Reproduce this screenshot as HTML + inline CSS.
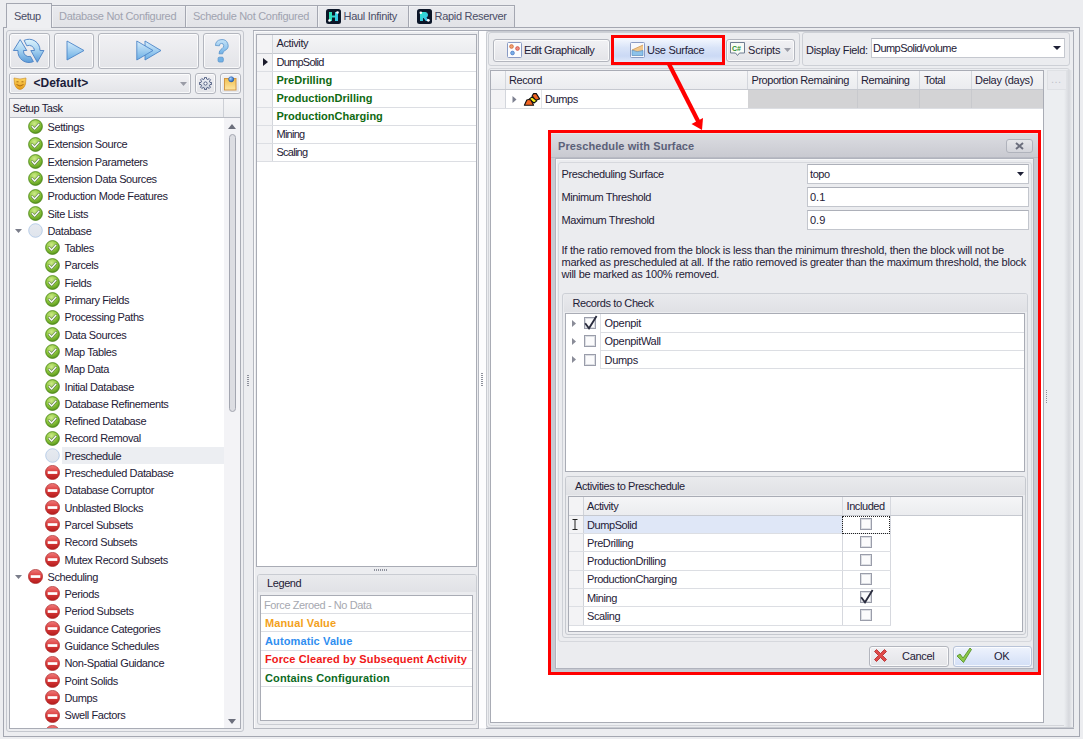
<!DOCTYPE html><html><head><meta charset="utf-8"><style>
html,body{margin:0;padding:0;}
body{width:1083px;height:739px;position:relative;overflow:hidden;background:#ecedf0;font-family:"Liberation Sans", sans-serif;font-size:11px;color:#1e2036;}
.t{position:absolute;white-space:nowrap;line-height:13px;letter-spacing:-0.4px;}
</style></head><body><div style="position:absolute;left:3px;top:27px;width:1077px;height:710px;box-sizing:border-box;border:1px solid #a4a7b1;background:#ecedf0"></div><div style="position:absolute;left:51px;top:5px;width:135px;height:23px;box-sizing:border-box;border:1px solid #a4a7b1;background:linear-gradient(#e9eaee,#e2e3e7);box-shadow:inset 1px 1px 0 #f1f2f4"></div><div class="t" style="left:59px;top:10px;color:#a0a3b0;letter-spacing:-0.3px">Database Not Configured</div><div style="position:absolute;left:185px;top:5px;width:133px;height:23px;box-sizing:border-box;border:1px solid #a4a7b1;background:linear-gradient(#e9eaee,#e2e3e7);box-shadow:inset 1px 1px 0 #f1f2f4"></div><div class="t" style="left:193px;top:10px;color:#a0a3b0;letter-spacing:-0.3px">Schedule Not Configured</div><div style="position:absolute;left:317px;top:5px;width:92px;height:23px;box-sizing:border-box;border:1px solid #a4a7b1;background:linear-gradient(#e9eaee,#e2e3e7);box-shadow:inset 1px 1px 0 #f1f2f4"></div><svg style="position:absolute;left:326px;top:9px" width="15" height="15" viewBox="0 0 15 15"><defs><linearGradient id="hg" x1="0" y1="0" x2="1" y2="0"><stop offset="0" stop-color="#2ee6b0"/><stop offset="1" stop-color="#3cc8f0"/></linearGradient></defs><rect x="0" y="0" width="15" height="15" rx="2.5" fill="#0c1628"/><path d="M3 3h3v3.5h3V3h3v9H9V8.5H6V12H3z" fill="url(#hg)"/><circle cx="11.5" cy="3.5" r="1.3" fill="#fff"/><circle cx="3.5" cy="11.5" r="1.3" fill="#fff"/></svg><div class="t" style="left:343.5px;top:10px;color:#4a4d66;letter-spacing:-0.3px">Haul Infinity</div><div style="position:absolute;left:408px;top:5px;width:107px;height:23px;box-sizing:border-box;border:1px solid #a4a7b1;background:linear-gradient(#e9eaee,#e2e3e7);box-shadow:inset 1px 1px 0 #f1f2f4"></div><svg style="position:absolute;left:417px;top:9px" width="15" height="15" viewBox="0 0 15 15"><defs><linearGradient id="rg" x1="0" y1="0" x2="1" y2="1"><stop offset="0" stop-color="#2ee6c8"/><stop offset="1" stop-color="#3cb8f0"/></linearGradient></defs><rect x="0" y="0" width="15" height="15" rx="2.5" fill="#0c1628"/><path d="M3 3h5.5a3 3 0 0 1 1 5.6L12 12H8.8L6.6 9H6v3H3z" fill="url(#rg)"/><circle cx="3.8" cy="3.8" r="1.3" fill="#fff"/><circle cx="11.3" cy="11.3" r="1.4" fill="#fff"/></svg><div class="t" style="left:434.5px;top:10px;color:#4a4d66;letter-spacing:-0.3px">Rapid Reserver</div><div style="position:absolute;left:6px;top:3px;width:46px;height:25px;box-sizing:border-box;border:1px solid #a4a7b1;border-bottom:none;background:#eeeff2"></div><div class="t" style="left:14px;top:10px;color:#4a4d66">Setup</div><div style="position:absolute;left:6px;top:30px;width:238px;height:702px;box-sizing:border-box;border:1px solid #c4c7ce;border-radius:3px;background:#ecedf0"></div><div style="position:absolute;left:9px;top:33px;width:41px;height:36px;box-sizing:border-box;border:1px solid #b3b6be;border-radius:3px;background:linear-gradient(#f1f1f4,#e3e4e8);box-shadow:inset 0 0 0 1px rgba(255,255,255,0.75);"></div><div style="position:absolute;left:54px;top:33px;width:40px;height:36px;box-sizing:border-box;border:1px solid #b3b6be;border-radius:3px;background:linear-gradient(#f1f1f4,#e3e4e8);box-shadow:inset 0 0 0 1px rgba(255,255,255,0.75);"></div><div style="position:absolute;left:98px;top:33px;width:101px;height:36px;box-sizing:border-box;border:1px solid #b3b6be;border-radius:3px;background:linear-gradient(#f1f1f4,#e3e4e8);box-shadow:inset 0 0 0 1px rgba(255,255,255,0.75);"></div><div style="position:absolute;left:203px;top:33px;width:38px;height:36px;box-sizing:border-box;border:1px solid #b3b6be;border-radius:3px;background:linear-gradient(#f1f1f4,#e3e4e8);box-shadow:inset 0 0 0 1px rgba(255,255,255,0.75);"></div><svg style="position:absolute;left:9px;top:33px" width="41" height="36" viewBox="0 0 41 36"><defs><linearGradient id="bl" x1="0" y1="0" x2="0" y2="1"><stop offset="0" stop-color="#dff4fd"/><stop offset="0.45" stop-color="#a8d4f2"/><stop offset="1" stop-color="#5b9bd8"/></linearGradient></defs>
<path d="M9 17.5 L4.4 17.5 L11.2 6.6 L17.8 17.5 L14.5 17.5 A5.5 5.5 0 0 0 21.5 23.4 L24.4 28.6 A11 11 0 0 1 9 17.5 Z" fill="url(#bl)" stroke="#4a80c4" stroke-width="0.9" stroke-linejoin="round"/>
<path d="M15.1 7.4 A11 11 0 0 1 31 17.5 L34.9 17.5 L28.3 29.3 L21.8 17.5 L25.5 17.5 A5.5 5.5 0 0 0 17.8 12.8 Z" fill="url(#bl)" stroke="#4a80c4" stroke-width="0.9" stroke-linejoin="round"/></svg><svg style="position:absolute;left:66px;top:40px" width="19" height="21" viewBox="0 0 19 21"><defs><linearGradient id="pl" x1="0" y1="0" x2="0" y2="1"><stop offset="0" stop-color="#d8eefc"/><stop offset="1" stop-color="#6aaee4"/></linearGradient></defs><path d="M1 1 L18 10.5 L1 20 Z" fill="url(#pl)" stroke="#4d86c8" stroke-width="0.9"/></svg><svg style="position:absolute;left:135px;top:40px" width="28" height="21" viewBox="0 0 28 21"><defs><linearGradient id="pl2" x1="0" y1="0" x2="0" y2="1"><stop offset="0" stop-color="#d8eefc"/><stop offset="1" stop-color="#6aaee4"/></linearGradient></defs><path d="M10 1 L26 10.5 L10 20 Z" fill="url(#pl2)" stroke="#4d86c8" stroke-width="0.9"/><path d="M1.8 1 L18 10.5 L1.8 20 Z" fill="url(#pl2)" stroke="#4d86c8" stroke-width="0.9"/></svg><svg style="position:absolute;left:214px;top:39px" width="16" height="24" viewBox="0 0 16 24"><defs><linearGradient id="hq" x1="0" y1="0" x2="0" y2="1"><stop offset="0" stop-color="#c6e4f8"/><stop offset="1" stop-color="#72b2e6"/></linearGradient></defs><path d="M1.5 6.5 A6.3 5.9 0 1 1 10.7 11.7 Q8.7 12.9 8.7 14.8 L5 14.8 Q4.8 11.6 8 9.6 Q10 8.3 9.7 6.4 A2.1 2.1 0 0 0 5.4 6.8 Z" fill="url(#hq)" stroke="#5b94cc" stroke-width="0.8"/><rect x="4.1" y="18.2" width="5.2" height="4.8" rx="1.2" fill="#72b2e6" stroke="#5b94cc" stroke-width="0.8"/></svg><div style="position:absolute;left:9px;top:73px;width:182px;height:21px;box-sizing:border-box;border:1px solid #b3b6be;border-radius:3px;background:linear-gradient(#f1f1f4,#e3e4e8);box-shadow:inset 0 0 0 1px rgba(255,255,255,0.75);border-radius:2px"></div><svg style="position:absolute;left:13px;top:77px" width="14" height="13" viewBox="0 0 14 13"><defs><linearGradient id="mk" x1="0" y1="0" x2="0" y2="1"><stop offset="0" stop-color="#ffd860"/><stop offset="1" stop-color="#e59a18"/></linearGradient></defs><path d="M1 1 Q7 3 13 1 L12.5 7 Q11 12 7 12.5 Q3 12 1.5 7 Z" fill="url(#mk)" stroke="#c88418" stroke-width="0.6"/><path d="M3.5 7.5 Q7 10.5 10.5 7.5" stroke="#a56410" stroke-width="0.9" fill="none"/><path d="M3.5 4.8 h2 M8.5 4.8 h2" stroke="#a56410" stroke-width="0.9"/></svg><div class="t" style="left:33.5px;top:77px;font-weight:bold;font-size:12px;letter-spacing:0;color:#1b1d3a">&lt;Default&gt;</div><svg style="position:absolute;left:180px;top:82px" width="7" height="4" viewBox="0 0 7 4"><path d="M0 0h7L3.5 4z" fill="#9a9ca6"/></svg><div style="position:absolute;left:195px;top:73px;width:21px;height:21px;box-sizing:border-box;border:1px solid #b3b6be;border-radius:3px;background:linear-gradient(#f1f1f4,#e3e4e8);box-shadow:inset 0 0 0 1px rgba(255,255,255,0.75);"></div><svg style="position:absolute;left:199px;top:77px" width="13" height="13" viewBox="0 0 13 13"><defs><linearGradient id="gr" x1="0" y1="0" x2="0" y2="1"><stop offset="0" stop-color="#f4f6fa"/><stop offset="1" stop-color="#c9d0dc"/></linearGradient></defs><path d="M12.62 5.53 L12.62 7.47 L10.97 7.57 L10.42 8.90 L11.52 10.14 L10.14 11.52 L8.90 10.42 L7.57 10.97 L7.47 12.62 L5.53 12.62 L5.43 10.97 L4.10 10.42 L2.86 11.52 L1.48 10.14 L2.58 8.90 L2.03 7.57 L0.38 7.47 L0.38 5.53 L2.03 5.43 L2.58 4.10 L1.48 2.86 L2.86 1.48 L4.10 2.58 L5.43 2.03 L5.53 0.38 L7.47 0.38 L7.57 2.03 L8.90 2.58 L10.14 1.48 L11.52 2.86 L10.42 4.10 L10.97 5.43 Z" fill="url(#gr)" stroke="#46557a" stroke-width="0.9" stroke-linejoin="round"/><circle cx="6.5" cy="6.5" r="1.6" fill="#fff" stroke="#46557a" stroke-width="0.9"/></svg><div style="position:absolute;left:220px;top:73px;width:21px;height:21px;box-sizing:border-box;border:1px solid #b3b6be;border-radius:3px;background:linear-gradient(#f1f1f4,#e3e4e8);box-shadow:inset 0 0 0 1px rgba(255,255,255,0.75);"></div><svg style="position:absolute;left:223px;top:76px" width="15" height="16" viewBox="0 0 15 16"><defs><linearGradient id="nt" x1="0" y1="0" x2="0" y2="1"><stop offset="0" stop-color="#f2c050"/><stop offset="1" stop-color="#fde6a4"/></linearGradient><radialGradient id="pin" cx="0.35" cy="0.35" r="0.7"><stop offset="0" stop-color="#a8d4ff"/><stop offset="1" stop-color="#1f5fb8"/></radialGradient></defs><rect x="1.5" y="2.5" width="11.5" height="11.5" fill="url(#nt)" stroke="#d0913a" stroke-width="0.9"/><circle cx="8.2" cy="3.3" r="2.6" fill="url(#pin)" stroke="#1d4f9a" stroke-width="0.5"/></svg><div style="position:absolute;left:9px;top:98px;width:232px;height:631px;box-sizing:border-box;border:1px solid #a9acb5;background:#fff"></div><div style="position:absolute;left:10px;top:99px;width:230px;height:18px;box-sizing:border-box;background:linear-gradient(#f5f5f7,#ebecef)"></div><div style="position:absolute;left:10px;top:117px;width:230px;height:1px;box-sizing:border-box;background:#b9bcc4"></div><div style="position:absolute;left:223px;top:99px;width:1px;height:18px;box-sizing:border-box;background:#cdd0d6"></div><div class="t" style="left:12.5px;top:102px;">Setup Task</div><div style="position:absolute;left:224px;top:118px;width:16px;height:610px;box-sizing:border-box;background:#f3f3f6"></div><svg style="position:absolute;left:228px;top:124px" width="8" height="5" viewBox="0 0 8 5"><path d="M0 5h8L4 0z" fill="#6c6f7c"/></svg><div style="position:absolute;left:229px;top:134px;width:7px;height:278px;box-sizing:border-box;border:1px solid #a3a6b0;border-radius:4px;background:#dcdde2"></div><svg style="position:absolute;left:228px;top:719px" width="8" height="5" viewBox="0 0 8 5"><path d="M0 0h8L4 5z" fill="#6c6f7c"/></svg><div style="position:absolute;left:10px;top:118px;width:214px;height:610px;overflow:hidden"><div style="position:absolute;left:-10px;top:-118px;width:1083px;height:739px"><svg style="position:absolute;left:27.5px;top:119.3px" width="15" height="15" viewBox="0 0 15 15"><defs><radialGradient id="g0" cx="0.42" cy="0.3" r="0.75"><stop offset="0" stop-color="#cdea8a"/><stop offset="0.55" stop-color="#8cc63a"/><stop offset="1" stop-color="#4e8c18"/></radialGradient></defs><circle cx="7.5" cy="7.5" r="6.9" fill="url(#g0)" stroke="#4a8418" stroke-width="0.8"/><path d="M4.2 7.6 L6.6 10 L10.9 5.3" fill="none" stroke="#5d7d48" stroke-width="2.6" stroke-linecap="round" stroke-linejoin="round"/><path d="M4.2 7.6 L6.6 10 L10.9 5.3" fill="none" stroke="#fafcf6" stroke-width="1.4" stroke-linecap="round" stroke-linejoin="round"/></svg><div class="t" style="left:47.5px;top:121.0px;">Settings</div><svg style="position:absolute;left:27.5px;top:136.60000000000002px" width="15" height="15" viewBox="0 0 15 15"><defs><radialGradient id="g1" cx="0.42" cy="0.3" r="0.75"><stop offset="0" stop-color="#cdea8a"/><stop offset="0.55" stop-color="#8cc63a"/><stop offset="1" stop-color="#4e8c18"/></radialGradient></defs><circle cx="7.5" cy="7.5" r="6.9" fill="url(#g1)" stroke="#4a8418" stroke-width="0.8"/><path d="M4.2 7.6 L6.6 10 L10.9 5.3" fill="none" stroke="#5d7d48" stroke-width="2.6" stroke-linecap="round" stroke-linejoin="round"/><path d="M4.2 7.6 L6.6 10 L10.9 5.3" fill="none" stroke="#fafcf6" stroke-width="1.4" stroke-linecap="round" stroke-linejoin="round"/></svg><div class="t" style="left:47.5px;top:138.3px;">Extension Source</div><svg style="position:absolute;left:27.5px;top:153.9px" width="15" height="15" viewBox="0 0 15 15"><defs><radialGradient id="g2" cx="0.42" cy="0.3" r="0.75"><stop offset="0" stop-color="#cdea8a"/><stop offset="0.55" stop-color="#8cc63a"/><stop offset="1" stop-color="#4e8c18"/></radialGradient></defs><circle cx="7.5" cy="7.5" r="6.9" fill="url(#g2)" stroke="#4a8418" stroke-width="0.8"/><path d="M4.2 7.6 L6.6 10 L10.9 5.3" fill="none" stroke="#5d7d48" stroke-width="2.6" stroke-linecap="round" stroke-linejoin="round"/><path d="M4.2 7.6 L6.6 10 L10.9 5.3" fill="none" stroke="#fafcf6" stroke-width="1.4" stroke-linecap="round" stroke-linejoin="round"/></svg><div class="t" style="left:47.5px;top:155.6px;">Extension Parameters</div><svg style="position:absolute;left:27.5px;top:171.20000000000002px" width="15" height="15" viewBox="0 0 15 15"><defs><radialGradient id="g3" cx="0.42" cy="0.3" r="0.75"><stop offset="0" stop-color="#cdea8a"/><stop offset="0.55" stop-color="#8cc63a"/><stop offset="1" stop-color="#4e8c18"/></radialGradient></defs><circle cx="7.5" cy="7.5" r="6.9" fill="url(#g3)" stroke="#4a8418" stroke-width="0.8"/><path d="M4.2 7.6 L6.6 10 L10.9 5.3" fill="none" stroke="#5d7d48" stroke-width="2.6" stroke-linecap="round" stroke-linejoin="round"/><path d="M4.2 7.6 L6.6 10 L10.9 5.3" fill="none" stroke="#fafcf6" stroke-width="1.4" stroke-linecap="round" stroke-linejoin="round"/></svg><div class="t" style="left:47.5px;top:172.9px;">Extension Data Sources</div><svg style="position:absolute;left:27.5px;top:188.5px" width="15" height="15" viewBox="0 0 15 15"><defs><radialGradient id="g4" cx="0.42" cy="0.3" r="0.75"><stop offset="0" stop-color="#cdea8a"/><stop offset="0.55" stop-color="#8cc63a"/><stop offset="1" stop-color="#4e8c18"/></radialGradient></defs><circle cx="7.5" cy="7.5" r="6.9" fill="url(#g4)" stroke="#4a8418" stroke-width="0.8"/><path d="M4.2 7.6 L6.6 10 L10.9 5.3" fill="none" stroke="#5d7d48" stroke-width="2.6" stroke-linecap="round" stroke-linejoin="round"/><path d="M4.2 7.6 L6.6 10 L10.9 5.3" fill="none" stroke="#fafcf6" stroke-width="1.4" stroke-linecap="round" stroke-linejoin="round"/></svg><div class="t" style="left:47.5px;top:190.2px;">Production Mode Features</div><svg style="position:absolute;left:27.5px;top:205.8px" width="15" height="15" viewBox="0 0 15 15"><defs><radialGradient id="g5" cx="0.42" cy="0.3" r="0.75"><stop offset="0" stop-color="#cdea8a"/><stop offset="0.55" stop-color="#8cc63a"/><stop offset="1" stop-color="#4e8c18"/></radialGradient></defs><circle cx="7.5" cy="7.5" r="6.9" fill="url(#g5)" stroke="#4a8418" stroke-width="0.8"/><path d="M4.2 7.6 L6.6 10 L10.9 5.3" fill="none" stroke="#5d7d48" stroke-width="2.6" stroke-linecap="round" stroke-linejoin="round"/><path d="M4.2 7.6 L6.6 10 L10.9 5.3" fill="none" stroke="#fafcf6" stroke-width="1.4" stroke-linecap="round" stroke-linejoin="round"/></svg><div class="t" style="left:47.5px;top:207.5px;">Site Lists</div><svg style="position:absolute;left:15px;top:229px" width="7" height="4" viewBox="0 0 7 4"><path d="M0 0h7L3.5 4z" fill="#7a7d8a"/></svg><svg style="position:absolute;left:27.5px;top:223.10000000000002px" width="15" height="15" viewBox="0 0 15 15"><defs><linearGradient id="e6" x1="0" y1="0" x2="0" y2="1"><stop offset="0" stop-color="#e6eaf0"/><stop offset="1" stop-color="#dfe4ec"/></linearGradient></defs><circle cx="7.5" cy="7.5" r="6.8" fill="url(#e6)" stroke="#b3cbe6" stroke-width="0.9"/></svg><div class="t" style="left:47.5px;top:224.8px;">Database</div><svg style="position:absolute;left:45px;top:240.40000000000003px" width="15" height="15" viewBox="0 0 15 15"><defs><radialGradient id="g7" cx="0.42" cy="0.3" r="0.75"><stop offset="0" stop-color="#cdea8a"/><stop offset="0.55" stop-color="#8cc63a"/><stop offset="1" stop-color="#4e8c18"/></radialGradient></defs><circle cx="7.5" cy="7.5" r="6.9" fill="url(#g7)" stroke="#4a8418" stroke-width="0.8"/><path d="M4.2 7.6 L6.6 10 L10.9 5.3" fill="none" stroke="#5d7d48" stroke-width="2.6" stroke-linecap="round" stroke-linejoin="round"/><path d="M4.2 7.6 L6.6 10 L10.9 5.3" fill="none" stroke="#fafcf6" stroke-width="1.4" stroke-linecap="round" stroke-linejoin="round"/></svg><div class="t" style="left:64.5px;top:242.10000000000002px;">Tables</div><svg style="position:absolute;left:45px;top:257.7px" width="15" height="15" viewBox="0 0 15 15"><defs><radialGradient id="g8" cx="0.42" cy="0.3" r="0.75"><stop offset="0" stop-color="#cdea8a"/><stop offset="0.55" stop-color="#8cc63a"/><stop offset="1" stop-color="#4e8c18"/></radialGradient></defs><circle cx="7.5" cy="7.5" r="6.9" fill="url(#g8)" stroke="#4a8418" stroke-width="0.8"/><path d="M4.2 7.6 L6.6 10 L10.9 5.3" fill="none" stroke="#5d7d48" stroke-width="2.6" stroke-linecap="round" stroke-linejoin="round"/><path d="M4.2 7.6 L6.6 10 L10.9 5.3" fill="none" stroke="#fafcf6" stroke-width="1.4" stroke-linecap="round" stroke-linejoin="round"/></svg><div class="t" style="left:64.5px;top:259.4px;">Parcels</div><svg style="position:absolute;left:45px;top:275.00000000000006px" width="15" height="15" viewBox="0 0 15 15"><defs><radialGradient id="g9" cx="0.42" cy="0.3" r="0.75"><stop offset="0" stop-color="#cdea8a"/><stop offset="0.55" stop-color="#8cc63a"/><stop offset="1" stop-color="#4e8c18"/></radialGradient></defs><circle cx="7.5" cy="7.5" r="6.9" fill="url(#g9)" stroke="#4a8418" stroke-width="0.8"/><path d="M4.2 7.6 L6.6 10 L10.9 5.3" fill="none" stroke="#5d7d48" stroke-width="2.6" stroke-linecap="round" stroke-linejoin="round"/><path d="M4.2 7.6 L6.6 10 L10.9 5.3" fill="none" stroke="#fafcf6" stroke-width="1.4" stroke-linecap="round" stroke-linejoin="round"/></svg><div class="t" style="left:64.5px;top:276.70000000000005px;">Fields</div><svg style="position:absolute;left:45px;top:292.3px" width="15" height="15" viewBox="0 0 15 15"><defs><radialGradient id="g10" cx="0.42" cy="0.3" r="0.75"><stop offset="0" stop-color="#cdea8a"/><stop offset="0.55" stop-color="#8cc63a"/><stop offset="1" stop-color="#4e8c18"/></radialGradient></defs><circle cx="7.5" cy="7.5" r="6.9" fill="url(#g10)" stroke="#4a8418" stroke-width="0.8"/><path d="M4.2 7.6 L6.6 10 L10.9 5.3" fill="none" stroke="#5d7d48" stroke-width="2.6" stroke-linecap="round" stroke-linejoin="round"/><path d="M4.2 7.6 L6.6 10 L10.9 5.3" fill="none" stroke="#fafcf6" stroke-width="1.4" stroke-linecap="round" stroke-linejoin="round"/></svg><div class="t" style="left:64.5px;top:294.0px;">Primary Fields</div><svg style="position:absolute;left:45px;top:309.6px" width="15" height="15" viewBox="0 0 15 15"><defs><radialGradient id="g11" cx="0.42" cy="0.3" r="0.75"><stop offset="0" stop-color="#cdea8a"/><stop offset="0.55" stop-color="#8cc63a"/><stop offset="1" stop-color="#4e8c18"/></radialGradient></defs><circle cx="7.5" cy="7.5" r="6.9" fill="url(#g11)" stroke="#4a8418" stroke-width="0.8"/><path d="M4.2 7.6 L6.6 10 L10.9 5.3" fill="none" stroke="#5d7d48" stroke-width="2.6" stroke-linecap="round" stroke-linejoin="round"/><path d="M4.2 7.6 L6.6 10 L10.9 5.3" fill="none" stroke="#fafcf6" stroke-width="1.4" stroke-linecap="round" stroke-linejoin="round"/></svg><div class="t" style="left:64.5px;top:311.3px;">Processing Paths</div><svg style="position:absolute;left:45px;top:326.90000000000003px" width="15" height="15" viewBox="0 0 15 15"><defs><radialGradient id="g12" cx="0.42" cy="0.3" r="0.75"><stop offset="0" stop-color="#cdea8a"/><stop offset="0.55" stop-color="#8cc63a"/><stop offset="1" stop-color="#4e8c18"/></radialGradient></defs><circle cx="7.5" cy="7.5" r="6.9" fill="url(#g12)" stroke="#4a8418" stroke-width="0.8"/><path d="M4.2 7.6 L6.6 10 L10.9 5.3" fill="none" stroke="#5d7d48" stroke-width="2.6" stroke-linecap="round" stroke-linejoin="round"/><path d="M4.2 7.6 L6.6 10 L10.9 5.3" fill="none" stroke="#fafcf6" stroke-width="1.4" stroke-linecap="round" stroke-linejoin="round"/></svg><div class="t" style="left:64.5px;top:328.6px;">Data Sources</div><svg style="position:absolute;left:45px;top:344.2px" width="15" height="15" viewBox="0 0 15 15"><defs><radialGradient id="g13" cx="0.42" cy="0.3" r="0.75"><stop offset="0" stop-color="#cdea8a"/><stop offset="0.55" stop-color="#8cc63a"/><stop offset="1" stop-color="#4e8c18"/></radialGradient></defs><circle cx="7.5" cy="7.5" r="6.9" fill="url(#g13)" stroke="#4a8418" stroke-width="0.8"/><path d="M4.2 7.6 L6.6 10 L10.9 5.3" fill="none" stroke="#5d7d48" stroke-width="2.6" stroke-linecap="round" stroke-linejoin="round"/><path d="M4.2 7.6 L6.6 10 L10.9 5.3" fill="none" stroke="#fafcf6" stroke-width="1.4" stroke-linecap="round" stroke-linejoin="round"/></svg><div class="t" style="left:64.5px;top:345.9px;">Map Tables</div><svg style="position:absolute;left:45px;top:361.50000000000006px" width="15" height="15" viewBox="0 0 15 15"><defs><radialGradient id="g14" cx="0.42" cy="0.3" r="0.75"><stop offset="0" stop-color="#cdea8a"/><stop offset="0.55" stop-color="#8cc63a"/><stop offset="1" stop-color="#4e8c18"/></radialGradient></defs><circle cx="7.5" cy="7.5" r="6.9" fill="url(#g14)" stroke="#4a8418" stroke-width="0.8"/><path d="M4.2 7.6 L6.6 10 L10.9 5.3" fill="none" stroke="#5d7d48" stroke-width="2.6" stroke-linecap="round" stroke-linejoin="round"/><path d="M4.2 7.6 L6.6 10 L10.9 5.3" fill="none" stroke="#fafcf6" stroke-width="1.4" stroke-linecap="round" stroke-linejoin="round"/></svg><div class="t" style="left:64.5px;top:363.20000000000005px;">Map Data</div><svg style="position:absolute;left:45px;top:378.8px" width="15" height="15" viewBox="0 0 15 15"><defs><radialGradient id="g15" cx="0.42" cy="0.3" r="0.75"><stop offset="0" stop-color="#cdea8a"/><stop offset="0.55" stop-color="#8cc63a"/><stop offset="1" stop-color="#4e8c18"/></radialGradient></defs><circle cx="7.5" cy="7.5" r="6.9" fill="url(#g15)" stroke="#4a8418" stroke-width="0.8"/><path d="M4.2 7.6 L6.6 10 L10.9 5.3" fill="none" stroke="#5d7d48" stroke-width="2.6" stroke-linecap="round" stroke-linejoin="round"/><path d="M4.2 7.6 L6.6 10 L10.9 5.3" fill="none" stroke="#fafcf6" stroke-width="1.4" stroke-linecap="round" stroke-linejoin="round"/></svg><div class="t" style="left:64.5px;top:380.5px;">Initial Database</div><svg style="position:absolute;left:45px;top:396.1px" width="15" height="15" viewBox="0 0 15 15"><defs><radialGradient id="g16" cx="0.42" cy="0.3" r="0.75"><stop offset="0" stop-color="#cdea8a"/><stop offset="0.55" stop-color="#8cc63a"/><stop offset="1" stop-color="#4e8c18"/></radialGradient></defs><circle cx="7.5" cy="7.5" r="6.9" fill="url(#g16)" stroke="#4a8418" stroke-width="0.8"/><path d="M4.2 7.6 L6.6 10 L10.9 5.3" fill="none" stroke="#5d7d48" stroke-width="2.6" stroke-linecap="round" stroke-linejoin="round"/><path d="M4.2 7.6 L6.6 10 L10.9 5.3" fill="none" stroke="#fafcf6" stroke-width="1.4" stroke-linecap="round" stroke-linejoin="round"/></svg><div class="t" style="left:64.5px;top:397.8px;">Database Refinements</div><svg style="position:absolute;left:45px;top:413.40000000000003px" width="15" height="15" viewBox="0 0 15 15"><defs><radialGradient id="g17" cx="0.42" cy="0.3" r="0.75"><stop offset="0" stop-color="#cdea8a"/><stop offset="0.55" stop-color="#8cc63a"/><stop offset="1" stop-color="#4e8c18"/></radialGradient></defs><circle cx="7.5" cy="7.5" r="6.9" fill="url(#g17)" stroke="#4a8418" stroke-width="0.8"/><path d="M4.2 7.6 L6.6 10 L10.9 5.3" fill="none" stroke="#5d7d48" stroke-width="2.6" stroke-linecap="round" stroke-linejoin="round"/><path d="M4.2 7.6 L6.6 10 L10.9 5.3" fill="none" stroke="#fafcf6" stroke-width="1.4" stroke-linecap="round" stroke-linejoin="round"/></svg><div class="t" style="left:64.5px;top:415.1px;">Refined Database</div><svg style="position:absolute;left:45px;top:430.70000000000005px" width="15" height="15" viewBox="0 0 15 15"><defs><radialGradient id="g18" cx="0.42" cy="0.3" r="0.75"><stop offset="0" stop-color="#cdea8a"/><stop offset="0.55" stop-color="#8cc63a"/><stop offset="1" stop-color="#4e8c18"/></radialGradient></defs><circle cx="7.5" cy="7.5" r="6.9" fill="url(#g18)" stroke="#4a8418" stroke-width="0.8"/><path d="M4.2 7.6 L6.6 10 L10.9 5.3" fill="none" stroke="#5d7d48" stroke-width="2.6" stroke-linecap="round" stroke-linejoin="round"/><path d="M4.2 7.6 L6.6 10 L10.9 5.3" fill="none" stroke="#fafcf6" stroke-width="1.4" stroke-linecap="round" stroke-linejoin="round"/></svg><div class="t" style="left:64.5px;top:432.40000000000003px;">Record Removal</div><div style="position:absolute;left:62px;top:447.2px;width:162px;height:17.3px;background:#eceef2"></div><svg style="position:absolute;left:45px;top:448.0px" width="15" height="15" viewBox="0 0 15 15"><defs><linearGradient id="e19" x1="0" y1="0" x2="0" y2="1"><stop offset="0" stop-color="#e6eaf0"/><stop offset="1" stop-color="#dfe4ec"/></linearGradient></defs><circle cx="7.5" cy="7.5" r="6.8" fill="url(#e19)" stroke="#b3cbe6" stroke-width="0.9"/></svg><div class="t" style="left:64.5px;top:449.7px;">Preschedule</div><svg style="position:absolute;left:45px;top:465.3px" width="15" height="15" viewBox="0 0 15 15"><defs><linearGradient id="r20" x1="0" y1="0" x2="0" y2="1"><stop offset="0" stop-color="#f07a7a"/><stop offset="0.5" stop-color="#d83a3a"/><stop offset="1" stop-color="#b41c1c"/></linearGradient></defs><circle cx="7.5" cy="7.5" r="7.1" fill="url(#r20)" stroke="#a01818" stroke-width="0.6"/><rect x="2.7" y="6.2" width="9.6" height="2.7" fill="#fff"/></svg><div class="t" style="left:64.5px;top:467.0px;">Prescheduled Database</div><svg style="position:absolute;left:45px;top:482.6px" width="15" height="15" viewBox="0 0 15 15"><defs><linearGradient id="r21" x1="0" y1="0" x2="0" y2="1"><stop offset="0" stop-color="#f07a7a"/><stop offset="0.5" stop-color="#d83a3a"/><stop offset="1" stop-color="#b41c1c"/></linearGradient></defs><circle cx="7.5" cy="7.5" r="7.1" fill="url(#r21)" stroke="#a01818" stroke-width="0.6"/><rect x="2.7" y="6.2" width="9.6" height="2.7" fill="#fff"/></svg><div class="t" style="left:64.5px;top:484.3px;">Database Corruptor</div><svg style="position:absolute;left:45px;top:499.90000000000003px" width="15" height="15" viewBox="0 0 15 15"><defs><linearGradient id="r22" x1="0" y1="0" x2="0" y2="1"><stop offset="0" stop-color="#f07a7a"/><stop offset="0.5" stop-color="#d83a3a"/><stop offset="1" stop-color="#b41c1c"/></linearGradient></defs><circle cx="7.5" cy="7.5" r="7.1" fill="url(#r22)" stroke="#a01818" stroke-width="0.6"/><rect x="2.7" y="6.2" width="9.6" height="2.7" fill="#fff"/></svg><div class="t" style="left:64.5px;top:501.6px;">Unblasted Blocks</div><svg style="position:absolute;left:45px;top:517.2px" width="15" height="15" viewBox="0 0 15 15"><defs><linearGradient id="r23" x1="0" y1="0" x2="0" y2="1"><stop offset="0" stop-color="#f07a7a"/><stop offset="0.5" stop-color="#d83a3a"/><stop offset="1" stop-color="#b41c1c"/></linearGradient></defs><circle cx="7.5" cy="7.5" r="7.1" fill="url(#r23)" stroke="#a01818" stroke-width="0.6"/><rect x="2.7" y="6.2" width="9.6" height="2.7" fill="#fff"/></svg><div class="t" style="left:64.5px;top:518.9000000000001px;">Parcel Subsets</div><svg style="position:absolute;left:45px;top:534.5px" width="15" height="15" viewBox="0 0 15 15"><defs><linearGradient id="r24" x1="0" y1="0" x2="0" y2="1"><stop offset="0" stop-color="#f07a7a"/><stop offset="0.5" stop-color="#d83a3a"/><stop offset="1" stop-color="#b41c1c"/></linearGradient></defs><circle cx="7.5" cy="7.5" r="7.1" fill="url(#r24)" stroke="#a01818" stroke-width="0.6"/><rect x="2.7" y="6.2" width="9.6" height="2.7" fill="#fff"/></svg><div class="t" style="left:64.5px;top:536.2px;">Record Subsets</div><svg style="position:absolute;left:45px;top:551.8px" width="15" height="15" viewBox="0 0 15 15"><defs><linearGradient id="r25" x1="0" y1="0" x2="0" y2="1"><stop offset="0" stop-color="#f07a7a"/><stop offset="0.5" stop-color="#d83a3a"/><stop offset="1" stop-color="#b41c1c"/></linearGradient></defs><circle cx="7.5" cy="7.5" r="7.1" fill="url(#r25)" stroke="#a01818" stroke-width="0.6"/><rect x="2.7" y="6.2" width="9.6" height="2.7" fill="#fff"/></svg><div class="t" style="left:64.5px;top:553.5px;">Mutex Record Subsets</div><svg style="position:absolute;left:15px;top:575px" width="7" height="4" viewBox="0 0 7 4"><path d="M0 0h7L3.5 4z" fill="#7a7d8a"/></svg><svg style="position:absolute;left:27.5px;top:569.0999999999999px" width="15" height="15" viewBox="0 0 15 15"><defs><linearGradient id="r26" x1="0" y1="0" x2="0" y2="1"><stop offset="0" stop-color="#f07a7a"/><stop offset="0.5" stop-color="#d83a3a"/><stop offset="1" stop-color="#b41c1c"/></linearGradient></defs><circle cx="7.5" cy="7.5" r="7.1" fill="url(#r26)" stroke="#a01818" stroke-width="0.6"/><rect x="2.7" y="6.2" width="9.6" height="2.7" fill="#fff"/></svg><div class="t" style="left:47.5px;top:570.8px;">Scheduling</div><svg style="position:absolute;left:45px;top:586.4px" width="15" height="15" viewBox="0 0 15 15"><defs><linearGradient id="r27" x1="0" y1="0" x2="0" y2="1"><stop offset="0" stop-color="#f07a7a"/><stop offset="0.5" stop-color="#d83a3a"/><stop offset="1" stop-color="#b41c1c"/></linearGradient></defs><circle cx="7.5" cy="7.5" r="7.1" fill="url(#r27)" stroke="#a01818" stroke-width="0.6"/><rect x="2.7" y="6.2" width="9.6" height="2.7" fill="#fff"/></svg><div class="t" style="left:64.5px;top:588.1px;">Periods</div><svg style="position:absolute;left:45px;top:603.7px" width="15" height="15" viewBox="0 0 15 15"><defs><linearGradient id="r28" x1="0" y1="0" x2="0" y2="1"><stop offset="0" stop-color="#f07a7a"/><stop offset="0.5" stop-color="#d83a3a"/><stop offset="1" stop-color="#b41c1c"/></linearGradient></defs><circle cx="7.5" cy="7.5" r="7.1" fill="url(#r28)" stroke="#a01818" stroke-width="0.6"/><rect x="2.7" y="6.2" width="9.6" height="2.7" fill="#fff"/></svg><div class="t" style="left:64.5px;top:605.4000000000001px;">Period Subsets</div><svg style="position:absolute;left:45px;top:621.0px" width="15" height="15" viewBox="0 0 15 15"><defs><linearGradient id="r29" x1="0" y1="0" x2="0" y2="1"><stop offset="0" stop-color="#f07a7a"/><stop offset="0.5" stop-color="#d83a3a"/><stop offset="1" stop-color="#b41c1c"/></linearGradient></defs><circle cx="7.5" cy="7.5" r="7.1" fill="url(#r29)" stroke="#a01818" stroke-width="0.6"/><rect x="2.7" y="6.2" width="9.6" height="2.7" fill="#fff"/></svg><div class="t" style="left:64.5px;top:622.7px;">Guidance Categories</div><svg style="position:absolute;left:45px;top:638.3px" width="15" height="15" viewBox="0 0 15 15"><defs><linearGradient id="r30" x1="0" y1="0" x2="0" y2="1"><stop offset="0" stop-color="#f07a7a"/><stop offset="0.5" stop-color="#d83a3a"/><stop offset="1" stop-color="#b41c1c"/></linearGradient></defs><circle cx="7.5" cy="7.5" r="7.1" fill="url(#r30)" stroke="#a01818" stroke-width="0.6"/><rect x="2.7" y="6.2" width="9.6" height="2.7" fill="#fff"/></svg><div class="t" style="left:64.5px;top:640.0px;">Guidance Schedules</div><svg style="position:absolute;left:45px;top:655.6px" width="15" height="15" viewBox="0 0 15 15"><defs><linearGradient id="r31" x1="0" y1="0" x2="0" y2="1"><stop offset="0" stop-color="#f07a7a"/><stop offset="0.5" stop-color="#d83a3a"/><stop offset="1" stop-color="#b41c1c"/></linearGradient></defs><circle cx="7.5" cy="7.5" r="7.1" fill="url(#r31)" stroke="#a01818" stroke-width="0.6"/><rect x="2.7" y="6.2" width="9.6" height="2.7" fill="#fff"/></svg><div class="t" style="left:64.5px;top:657.3000000000001px;">Non-Spatial Guidance</div><svg style="position:absolute;left:45px;top:672.9px" width="15" height="15" viewBox="0 0 15 15"><defs><linearGradient id="r32" x1="0" y1="0" x2="0" y2="1"><stop offset="0" stop-color="#f07a7a"/><stop offset="0.5" stop-color="#d83a3a"/><stop offset="1" stop-color="#b41c1c"/></linearGradient></defs><circle cx="7.5" cy="7.5" r="7.1" fill="url(#r32)" stroke="#a01818" stroke-width="0.6"/><rect x="2.7" y="6.2" width="9.6" height="2.7" fill="#fff"/></svg><div class="t" style="left:64.5px;top:674.6px;">Point Solids</div><svg style="position:absolute;left:45px;top:690.1999999999999px" width="15" height="15" viewBox="0 0 15 15"><defs><linearGradient id="r33" x1="0" y1="0" x2="0" y2="1"><stop offset="0" stop-color="#f07a7a"/><stop offset="0.5" stop-color="#d83a3a"/><stop offset="1" stop-color="#b41c1c"/></linearGradient></defs><circle cx="7.5" cy="7.5" r="7.1" fill="url(#r33)" stroke="#a01818" stroke-width="0.6"/><rect x="2.7" y="6.2" width="9.6" height="2.7" fill="#fff"/></svg><div class="t" style="left:64.5px;top:691.9px;">Dumps</div><svg style="position:absolute;left:45px;top:707.5px" width="15" height="15" viewBox="0 0 15 15"><defs><linearGradient id="r34" x1="0" y1="0" x2="0" y2="1"><stop offset="0" stop-color="#f07a7a"/><stop offset="0.5" stop-color="#d83a3a"/><stop offset="1" stop-color="#b41c1c"/></linearGradient></defs><circle cx="7.5" cy="7.5" r="7.1" fill="url(#r34)" stroke="#a01818" stroke-width="0.6"/><rect x="2.7" y="6.2" width="9.6" height="2.7" fill="#fff"/></svg><div class="t" style="left:64.5px;top:709.2px;">Swell Factors</div><svg style="position:absolute;left:45px;top:724.8px" width="15" height="15" viewBox="0 0 15 15"><defs><linearGradient id="r35" x1="0" y1="0" x2="0" y2="1"><stop offset="0" stop-color="#f07a7a"/><stop offset="0.5" stop-color="#d83a3a"/><stop offset="1" stop-color="#b41c1c"/></linearGradient></defs><circle cx="7.5" cy="7.5" r="7.1" fill="url(#r35)" stroke="#a01818" stroke-width="0.6"/><rect x="2.7" y="6.2" width="9.6" height="2.7" fill="#fff"/></svg><div class="t" style="left:64.5px;top:726.5px;">Truck Modes</div></div></div><div style="position:absolute;left:253px;top:30px;width:226px;height:699px;box-sizing:border-box;border:1px solid #b5b8c0;background:#ecedf0;box-shadow:inset 1px 1px 0 #fafafb"></div><div style="position:absolute;left:247px;top:375px;width:2px;height:1px;box-sizing:border-box;background:#8e919c"></div><div style="position:absolute;left:247px;top:377px;width:2px;height:1px;box-sizing:border-box;background:#8e919c"></div><div style="position:absolute;left:247px;top:379px;width:2px;height:1px;box-sizing:border-box;background:#8e919c"></div><div style="position:absolute;left:247px;top:381px;width:2px;height:1px;box-sizing:border-box;background:#8e919c"></div><div style="position:absolute;left:247px;top:383px;width:2px;height:1px;box-sizing:border-box;background:#8e919c"></div><div style="position:absolute;left:247px;top:385px;width:2px;height:1px;box-sizing:border-box;background:#8e919c"></div><div style="position:absolute;left:479px;top:31px;width:7px;height:697px;box-sizing:border-box;background:#fdfdfe"></div><div style="position:absolute;left:481px;top:373px;width:2px;height:1px;box-sizing:border-box;background:#8e919c"></div><div style="position:absolute;left:481px;top:375px;width:2px;height:1px;box-sizing:border-box;background:#8e919c"></div><div style="position:absolute;left:481px;top:377px;width:2px;height:1px;box-sizing:border-box;background:#8e919c"></div><div style="position:absolute;left:481px;top:379px;width:2px;height:1px;box-sizing:border-box;background:#8e919c"></div><div style="position:absolute;left:481px;top:381px;width:2px;height:1px;box-sizing:border-box;background:#8e919c"></div><div style="position:absolute;left:481px;top:383px;width:2px;height:1px;box-sizing:border-box;background:#8e919c"></div><div style="position:absolute;left:481px;top:385px;width:2px;height:1px;box-sizing:border-box;background:#8e919c"></div><div style="position:absolute;left:256px;top:34px;width:221px;height:533px;box-sizing:border-box;border:1px solid #a9acb5;background:#fff"></div><div style="position:absolute;left:257px;top:35px;width:219px;height:18px;box-sizing:border-box;background:linear-gradient(#f5f5f7,#ebecef)"></div><div style="position:absolute;left:257px;top:35px;width:15px;height:126px;box-sizing:border-box;background:#f3f3f5"></div><div style="position:absolute;left:257px;top:53px;width:219px;height:1px;box-sizing:border-box;background:#c6c9d0"></div><div style="position:absolute;left:272px;top:35px;width:1px;height:126px;box-sizing:border-box;background:#d3d6dc"></div><div class="t" style="left:276.5px;top:36.5px;">Activity</div><div style="position:absolute;left:257px;top:71px;width:219px;height:1px;box-sizing:border-box;background:#dcdee3"></div><div class="t" style="left:276.5px;top:56px;letter-spacing:-0.75px">DumpSolid</div><div style="position:absolute;left:257px;top:89px;width:219px;height:1px;box-sizing:border-box;background:#dcdee3"></div><div class="t" style="left:276.5px;top:74px;font-weight:bold;letter-spacing:0;color:#0f6a12">PreDrilling</div><div style="position:absolute;left:257px;top:107px;width:219px;height:1px;box-sizing:border-box;background:#dcdee3"></div><div class="t" style="left:276.5px;top:92px;font-weight:bold;letter-spacing:0;color:#0f6a12">ProductionDrilling</div><div style="position:absolute;left:257px;top:125px;width:219px;height:1px;box-sizing:border-box;background:#dcdee3"></div><div class="t" style="left:276.5px;top:110px;font-weight:bold;letter-spacing:0;color:#0f6a12">ProductionCharging</div><div style="position:absolute;left:257px;top:143px;width:219px;height:1px;box-sizing:border-box;background:#dcdee3"></div><div class="t" style="left:276.5px;top:128px;letter-spacing:-0.75px">Mining</div><div style="position:absolute;left:257px;top:161px;width:219px;height:1px;box-sizing:border-box;background:#dcdee3"></div><div class="t" style="left:276.5px;top:146px;letter-spacing:-0.75px">Scaling</div><svg style="position:absolute;left:263px;top:58px" width="5" height="8" viewBox="0 0 5 8"><path d="M0 0L5 4L0 8z" fill="#1a1a2a"/></svg><div style="position:absolute;left:374px;top:569px;width:1px;height:2px;box-sizing:border-box;background:#8e919c"></div><div style="position:absolute;left:376px;top:569px;width:1px;height:2px;box-sizing:border-box;background:#8e919c"></div><div style="position:absolute;left:378px;top:569px;width:1px;height:2px;box-sizing:border-box;background:#8e919c"></div><div style="position:absolute;left:380px;top:569px;width:1px;height:2px;box-sizing:border-box;background:#8e919c"></div><div style="position:absolute;left:382px;top:569px;width:1px;height:2px;box-sizing:border-box;background:#8e919c"></div><div style="position:absolute;left:384px;top:569px;width:1px;height:2px;box-sizing:border-box;background:#8e919c"></div><div style="position:absolute;left:386px;top:569px;width:1px;height:2px;box-sizing:border-box;background:#8e919c"></div><div style="position:absolute;left:257px;top:574px;width:220px;height:151px;box-sizing:border-box;border:1px solid #c9ccd2;border-radius:3px;background:#ebecef"></div><div style="position:absolute;left:258px;top:575px;width:218px;height:17px;box-sizing:border-box;background:linear-gradient(#e9eaed,#e1e2e6);border-radius:2px 2px 0 0"></div><div class="t" style="left:267px;top:577px;">Legend</div><div style="position:absolute;left:260px;top:595px;width:213px;height:126px;box-sizing:border-box;border:1px solid #a9acb5;background:#fff"></div><div style="position:absolute;left:261px;top:613px;width:211px;height:1px;box-sizing:border-box;background:#dcdee3"></div><div class="t" style="left:264px;top:598.5px;color:#a6a8b0">Force Zeroed - No Data</div><div style="position:absolute;left:261px;top:631px;width:211px;height:1px;box-sizing:border-box;background:#dcdee3"></div><div class="t" style="left:265px;top:616.8px;font-weight:bold;letter-spacing:0.12px;color:#f3a11b">Manual Value</div><div style="position:absolute;left:261px;top:650px;width:211px;height:1px;box-sizing:border-box;background:#dcdee3"></div><div class="t" style="left:265px;top:635.1px;font-weight:bold;letter-spacing:0.12px;color:#2f8ef0">Automatic Value</div><div style="position:absolute;left:261px;top:668px;width:211px;height:1px;box-sizing:border-box;background:#dcdee3"></div><div class="t" style="left:265px;top:653.4px;font-weight:bold;letter-spacing:0.12px;color:#f01818">Force Cleared by Subsequent Activity</div><div style="position:absolute;left:261px;top:686px;width:211px;height:1px;box-sizing:border-box;background:#dcdee3"></div><div class="t" style="left:265px;top:671.7px;font-weight:bold;letter-spacing:0.12px;color:#0c6a1e">Contains Configuration</div><div style="position:absolute;left:486px;top:31px;width:588px;height:697px;box-sizing:border-box;border:1px solid #c9ccd2;border-right-color:#a9acb6;border-radius:3px 0 0 3px;background:#ecedf0"></div><div style="position:absolute;left:486px;top:728px;width:588px;height:1px;box-sizing:border-box;background:#a9acb6"></div><div style="position:absolute;left:253px;top:30px;width:821px;height:1px;box-sizing:border-box;background:#a9acb6"></div><div style="position:absolute;left:488px;top:32px;width:312px;height:34px;box-sizing:border-box;border:1px solid #cdd0d6;border-radius:3px;background:#ebecef"></div><div style="position:absolute;left:493px;top:39px;width:117px;height:23px;box-sizing:border-box;border:1px solid #b3b6be;border-radius:3px;background:linear-gradient(#f1f1f4,#e3e4e8);box-shadow:inset 0 0 0 1px rgba(255,255,255,0.75);"></div><svg style="position:absolute;left:507px;top:42px" width="15" height="16" viewBox="0 0 15 16"><rect x="0.5" y="0.5" width="14" height="15" rx="1" fill="#fbfcfe" stroke="#8a9bc4" stroke-width="1"/><circle cx="4.5" cy="4.5" r="1.9" fill="#f0a070" stroke="#c45a2a" stroke-width="0.6"/><circle cx="10.5" cy="6.5" r="1.9" fill="#f08a80" stroke="#c03a2a" stroke-width="0.6"/><circle cx="5.5" cy="11" r="1.9" fill="#7aaee8" stroke="#3a6ab8" stroke-width="0.6"/></svg><div class="t" style="left:524px;top:44px;letter-spacing:-0.42px">Edit Graphically</div><div style="position:absolute;left:613px;top:37px;width:110px;height:26px;box-sizing:border-box;border:1px solid #c3d0e8;background:linear-gradient(#f6f9ff,#d9e4f8 40%,#cbd9f5 75%,#dfe8fa)"></div><svg style="position:absolute;left:630px;top:42px" width="15" height="16" viewBox="0 0 15 16"><rect x="0.5" y="0.5" width="14" height="15" rx="1" fill="#f7f9fd" stroke="#8a9bc4" stroke-width="1"/><path d="M2 13.5 L2 8 L13 3 L13 13.5 Z" fill="#f2c78a"/><path d="M2 13.5 L2 8 Q7 11 13 8.5 L13 13.5 Z" fill="#8cc2ea" stroke="#4a86c4" stroke-width="0.6"/><path d="M2 8 L13 3" stroke="#c8904a" stroke-width="0.7"/></svg><div class="t" style="left:647px;top:44px;letter-spacing:-0.3px">Use Surface</div><div style="position:absolute;left:726px;top:39px;width:69px;height:23px;box-sizing:border-box;border:1px solid #b3b6be;border-radius:3px;background:linear-gradient(#f1f1f4,#e3e4e8);box-shadow:inset 0 0 0 1px rgba(255,255,255,0.75);"></div><svg style="position:absolute;left:729px;top:41px" width="17" height="17" viewBox="0 0 17 17"><path d="M1.5 1.5 h14 v10.5 h-5 l-2 2.5 l-2 -2.5 h-5 z" fill="#f8fbf6" stroke="#6f7d92" stroke-width="1"/><text x="3" y="9.5" font-family="Liberation Sans" font-size="7" font-weight="bold" fill="#2d8f2a">C#</text></svg><div class="t" style="left:748px;top:44px;letter-spacing:-0.2px">Scripts</div><svg style="position:absolute;left:784px;top:48px" width="7" height="4" viewBox="0 0 7 4"><path d="M0 0h7L3.5 4z" fill="#9a9ca6"/></svg><div style="position:absolute;left:802px;top:32px;width:268px;height:34px;box-sizing:border-box;border:1px solid #cdd0d6;border-radius:3px;background:#ebecef"></div><div class="t" style="left:806px;top:44px;letter-spacing:-0.3px">Display Field:</div><div style="position:absolute;left:871px;top:38px;width:194px;height:20px;box-sizing:border-box;border:1px solid #c5c8cf;border-top-color:#b5b8c0;background:#fff"></div><div class="t" style="left:873px;top:42px;letter-spacing:-0.55px">DumpSolid/volume</div><svg style="position:absolute;left:1053px;top:46px" width="8" height="4" viewBox="0 0 8 4"><path d="M0 0h8L4 4z" fill="#1e2036"/></svg><div style="position:absolute;left:488px;top:68px;width:582px;height:658px;box-sizing:border-box;border:1px solid #d3d5da;border-radius:3px;background:#eceef1"></div><div style="position:absolute;left:490px;top:70px;width:554px;height:653px;box-sizing:border-box;border:1px solid #a9acb5;background:#fff"></div><div style="position:absolute;left:491px;top:71px;width:552px;height:18px;box-sizing:border-box;background:linear-gradient(#f5f5f7,#ebecef)"></div><div style="position:absolute;left:491px;top:89px;width:552px;height:1px;box-sizing:border-box;background:#c6c9d0"></div><div style="position:absolute;left:505px;top:71px;width:1px;height:18px;box-sizing:border-box;background:#d3d6dc"></div><div style="position:absolute;left:747px;top:71px;width:1px;height:18px;box-sizing:border-box;background:#d3d6dc"></div><div style="position:absolute;left:857px;top:71px;width:1px;height:18px;box-sizing:border-box;background:#d3d6dc"></div><div style="position:absolute;left:919px;top:71px;width:1px;height:18px;box-sizing:border-box;background:#d3d6dc"></div><div style="position:absolute;left:971px;top:71px;width:1px;height:18px;box-sizing:border-box;background:#d3d6dc"></div><div class="t" style="left:509px;top:74px;">Record</div><div class="t" style="left:751.5px;top:74px;letter-spacing:-0.45px">Proportion Remaining</div><div class="t" style="left:861px;top:74px;letter-spacing:-0.45px">Remaining</div><div class="t" style="left:924px;top:74px;letter-spacing:-0.45px">Total</div><div class="t" style="left:975px;top:74px;letter-spacing:-0.3px">Delay (days)</div><div style="position:absolute;left:491px;top:90px;width:14px;height:18px;box-sizing:border-box;background:#f3f3f5"></div><div style="position:absolute;left:505px;top:90px;width:1px;height:18px;box-sizing:border-box;background:#d3d6dc"></div><div style="position:absolute;left:748px;top:90px;width:295px;height:18px;box-sizing:border-box;background:#d3d3d5"></div><div style="position:absolute;left:857px;top:90px;width:1px;height:18px;box-sizing:border-box;background:#c8c9cd"></div><div style="position:absolute;left:919px;top:90px;width:1px;height:18px;box-sizing:border-box;background:#c8c9cd"></div><div style="position:absolute;left:971px;top:90px;width:1px;height:18px;box-sizing:border-box;background:#c8c9cd"></div><div style="position:absolute;left:491px;top:108px;width:552px;height:1px;box-sizing:border-box;background:#dcdee3"></div><div style="position:absolute;left:541px;top:90px;width:1px;height:18px;box-sizing:border-box;background:#e2e4e8"></div><svg style="position:absolute;left:512px;top:96px" width="5" height="7" viewBox="0 0 5 7"><path d="M0.5 0L4.5 3.5L0.5 7z" fill="#7d8090"/></svg><svg style="position:absolute;left:520px;top:90px" width="22" height="18" viewBox="0 0 22 18"><g stroke="#111" stroke-width="1.1" stroke-linejoin="round"><path d="M12.2 5.8 L13.6 3.6 L16.3 3.6 L19.6 8.9 L15.6 10.3 Z" fill="#f26522"/><path d="M9.2 9.2 L12 6.8 L16.8 10.9 L14 13 Z" fill="#f4ee1c"/><path d="M4.4 15.2 L6.8 9.9 Q8.8 9 10.9 9.9 L13.6 15.2 Z" fill="#f26522"/></g></svg><div class="t" style="left:545px;top:92.5px;">Dumps</div><div style="position:absolute;left:1064px;top:70px;width:9px;height:657px;box-sizing:border-box;background:linear-gradient(90deg,#eceef1,#d6d8dd 55%,#e4e5e9 80%,#eeeff2)"></div><div style="position:absolute;left:1047px;top:70px;width:20px;height:20px;box-sizing:border-box;border:1px solid #dfe1e5;background:#e9eaee"></div><div class="t" style="left:1051px;top:73px;color:#c0c2ca;letter-spacing:0.5px">...</div><div style="position:absolute;left:1046px;top:390px;width:1px;height:1px;box-sizing:border-box;background:#8e919c"></div><div style="position:absolute;left:1046px;top:392px;width:1px;height:1px;box-sizing:border-box;background:#8e919c"></div><div style="position:absolute;left:1046px;top:394px;width:1px;height:1px;box-sizing:border-box;background:#8e919c"></div><div style="position:absolute;left:1046px;top:396px;width:1px;height:1px;box-sizing:border-box;background:#8e919c"></div><div style="position:absolute;left:1046px;top:398px;width:1px;height:1px;box-sizing:border-box;background:#8e919c"></div><div style="position:absolute;left:1046px;top:400px;width:1px;height:1px;box-sizing:border-box;background:#8e919c"></div><div style="position:absolute;left:1046px;top:402px;width:1px;height:1px;box-sizing:border-box;background:#8e919c"></div><div style="position:absolute;left:548px;top:130px;width:493px;height:545px;box-sizing:border-box;border:3px solid #ff0000"></div><div style="position:absolute;left:551px;top:133px;width:487px;height:539px;box-sizing:border-box;background:#c8cad2"></div><div style="position:absolute;left:551px;top:133px;width:487px;height:25px;box-sizing:border-box;background:linear-gradient(#dcdde2,#d3d4da 45%,#c8c9d0)"></div><div style="position:absolute;left:551px;top:133px;width:487px;height:1px;box-sizing:border-box;background:#e6e7ea"></div><div style="position:absolute;left:551px;top:157px;width:487px;height:1px;box-sizing:border-box;background:#b8bac3"></div><div class="t" style="left:558px;top:140px;font-weight:bold;letter-spacing:0.1px;color:#5b6078">Preschedule with Surface</div><div style="position:absolute;left:1006px;top:139px;width:27px;height:14px;box-sizing:border-box;border:1px solid #b0b3bc;border-radius:3px;background:linear-gradient(#e6e7ea,#d3d4da)"></div><svg style="position:absolute;left:1015px;top:142px" width="9" height="8" viewBox="0 0 9 8"><path d="M1 1L8 7M8 1L1 7" stroke="#6b6e7c" stroke-width="2"/></svg><div style="position:absolute;left:555px;top:158px;width:479px;height:511px;box-sizing:border-box;border:1px solid #b0b3bd;background:#ebecef;box-shadow:inset 1px 1px 0 #f6f7f8"></div><div style="position:absolute;left:558px;top:162px;width:474px;height:480px;box-sizing:border-box;border:1px solid #d6d8dd;border-radius:3px;background:#ebecef"></div><div class="t" style="left:561.5px;top:167.5px;">Prescheduling Surface</div><div class="t" style="left:561.5px;top:190.5px;">Minimum Threshold</div><div class="t" style="left:561.5px;top:213.5px;">Maximum Threshold</div><div style="position:absolute;left:807px;top:164px;width:222px;height:20px;box-sizing:border-box;border:1px solid #c3c6cd;border-top-color:#adb0b9;background:#fff"></div><div class="t" style="left:810px;top:168px;">topo</div><div style="position:absolute;left:807px;top:187px;width:222px;height:20px;box-sizing:border-box;border:1px solid #c3c6cd;border-top-color:#adb0b9;background:#fff"></div><div class="t" style="left:810px;top:191px;letter-spacing:0">0.1</div><div style="position:absolute;left:807px;top:210px;width:222px;height:20px;box-sizing:border-box;border:1px solid #c3c6cd;border-top-color:#adb0b9;background:#fff"></div><div class="t" style="left:810px;top:214px;letter-spacing:0">0.9</div><svg style="position:absolute;left:1017px;top:172px" width="7" height="4" viewBox="0 0 7 4"><path d="M0 0h7L3.5 4z" fill="#1e2036"/></svg><div class="t" style="left:561.5px;top:243.5px;letter-spacing:-0.24px">If the ratio removed from the block is less than the minimum threshold, then the block will not be</div><div class="t" style="left:561.5px;top:255.8px;letter-spacing:-0.24px">marked as prescheduled at all. If the ratio removed is greater than the maximum threshold, the block</div><div class="t" style="left:561.5px;top:268.1px;letter-spacing:-0.24px">will be marked as 100% removed.</div><div style="position:absolute;left:562px;top:293px;width:466px;height:345px;box-sizing:border-box;border:1px solid #cdd0d6;border-radius:3px;background:#ebecef"></div><div style="position:absolute;left:564px;top:294px;width:463px;height:18px;box-sizing:border-box;background:linear-gradient(#e9eaed,#e0e1e5);border-radius:2px 2px 0 0"></div><div class="t" style="left:572.5px;top:297px;">Records to Check</div><div style="position:absolute;left:565px;top:313px;width:460px;height:159px;box-sizing:border-box;border:1px solid #a9acb5;background:#fff"></div><div style="position:absolute;left:600px;top:314px;width:1px;height:55px;box-sizing:border-box;background:#dfe1e6"></div><div style="position:absolute;left:600px;top:332px;width:424px;height:1px;box-sizing:border-box;background:#dcdee3"></div><svg style="position:absolute;left:572px;top:320px" width="4" height="7" viewBox="0 0 4 7"><path d="M0 0L4 3.5L0 7z" fill="#8a8c98"/></svg><div style="position:absolute;left:584px;top:317px;width:12px;height:12px;box-sizing:border-box;border:1px solid #9a9daa;background:#fbfbfc;box-shadow:inset 0 0 0 1px #dcdee3"></div><svg style="position:absolute;left:584px;top:315px" width="14" height="16" viewBox="0 0 14 16"><path d="M1.2 8.3 L5 13.3 L12.6 1" fill="none" stroke="#2a2c3e" stroke-width="1.8"/></svg><div class="t" style="left:604.5px;top:317.0px;letter-spacing:-0.3px">Openpit</div><div style="position:absolute;left:600px;top:350px;width:424px;height:1px;box-sizing:border-box;background:#dcdee3"></div><svg style="position:absolute;left:572px;top:338px" width="4" height="7" viewBox="0 0 4 7"><path d="M0 0L4 3.5L0 7z" fill="#8a8c98"/></svg><div style="position:absolute;left:584px;top:335px;width:12px;height:12px;box-sizing:border-box;border:1px solid #9a9daa;background:#fbfbfc;box-shadow:inset 0 0 0 1px #dcdee3"></div><div class="t" style="left:604.5px;top:335.3px;letter-spacing:-0.3px">OpenpitWall</div><div style="position:absolute;left:600px;top:368px;width:424px;height:1px;box-sizing:border-box;background:#dcdee3"></div><svg style="position:absolute;left:572px;top:356px" width="4" height="7" viewBox="0 0 4 7"><path d="M0 0L4 3.5L0 7z" fill="#8a8c98"/></svg><div style="position:absolute;left:584px;top:354px;width:12px;height:12px;box-sizing:border-box;border:1px solid #9a9daa;background:#fbfbfc;box-shadow:inset 0 0 0 1px #dcdee3"></div><div class="t" style="left:604.5px;top:353.6px;letter-spacing:-0.3px">Dumps</div><div style="position:absolute;left:565px;top:476px;width:461px;height:159px;box-sizing:border-box;border:1px solid #c6c9cf;border-radius:3px"></div><div style="position:absolute;left:566px;top:477px;width:459px;height:18px;box-sizing:border-box;background:linear-gradient(#e9eaed,#e0e1e5);border-radius:2px 2px 0 0"></div><div class="t" style="left:575px;top:479.5px;">Activities to Preschedule</div><div style="position:absolute;left:568px;top:496px;width:455px;height:136px;box-sizing:border-box;border:1px solid #a9acb5;background:#fff"></div><div style="position:absolute;left:569px;top:497px;width:453px;height:18px;box-sizing:border-box;background:linear-gradient(#f5f5f7,#ebecef)"></div><div style="position:absolute;left:569px;top:497px;width:14px;height:128px;box-sizing:border-box;background:#f3f3f5"></div><div style="position:absolute;left:583px;top:497px;width:1px;height:128px;box-sizing:border-box;background:#d0d3d9"></div><div style="position:absolute;left:842px;top:497px;width:1px;height:128px;box-sizing:border-box;background:#d6d8de"></div><div style="position:absolute;left:890px;top:497px;width:1px;height:128px;box-sizing:border-box;background:#d6d8de"></div><div style="position:absolute;left:569px;top:515px;width:453px;height:1px;box-sizing:border-box;background:#c6c9d0"></div><div class="t" style="left:587px;top:500px;letter-spacing:-0.45px">Activity</div><div class="t" style="left:846.5px;top:500px;letter-spacing:-0.42px">Included</div><div style="position:absolute;left:584px;top:516px;width:258px;height:17px;box-sizing:border-box;background:#dfe7f7"></div><div style="position:absolute;left:569px;top:533px;width:322px;height:1px;box-sizing:border-box;background:#dcdee3"></div><div class="t" style="left:587px;top:518.5px;letter-spacing:-0.42px">DumpSolid</div><div style="position:absolute;left:860px;top:518px;width:12px;height:12px;box-sizing:border-box;border:1px solid #9a9daa;background:#fbfbfc;box-shadow:inset 0 0 0 1px #dcdee3"></div><div style="position:absolute;left:569px;top:551px;width:322px;height:1px;box-sizing:border-box;background:#dcdee3"></div><div class="t" style="left:587px;top:536.75px;letter-spacing:-0.42px">PreDrilling</div><div style="position:absolute;left:860px;top:536px;width:12px;height:12px;box-sizing:border-box;border:1px solid #9a9daa;background:#fbfbfc;box-shadow:inset 0 0 0 1px #dcdee3"></div><div style="position:absolute;left:569px;top:570px;width:322px;height:1px;box-sizing:border-box;background:#dcdee3"></div><div class="t" style="left:587px;top:555.0px;letter-spacing:-0.42px">ProductionDrilling</div><div style="position:absolute;left:860px;top:554px;width:12px;height:12px;box-sizing:border-box;border:1px solid #9a9daa;background:#fbfbfc;box-shadow:inset 0 0 0 1px #dcdee3"></div><div style="position:absolute;left:569px;top:588px;width:322px;height:1px;box-sizing:border-box;background:#dcdee3"></div><div class="t" style="left:587px;top:573.25px;letter-spacing:-0.42px">ProductionCharging</div><div style="position:absolute;left:860px;top:573px;width:12px;height:12px;box-sizing:border-box;border:1px solid #9a9daa;background:#fbfbfc;box-shadow:inset 0 0 0 1px #dcdee3"></div><div style="position:absolute;left:569px;top:606px;width:322px;height:1px;box-sizing:border-box;background:#dcdee3"></div><div class="t" style="left:587px;top:591.5px;letter-spacing:-0.42px">Mining</div><div style="position:absolute;left:860px;top:591px;width:12px;height:12px;box-sizing:border-box;border:1px solid #9a9daa;background:#fbfbfc;box-shadow:inset 0 0 0 1px #dcdee3"></div><svg style="position:absolute;left:860px;top:589px" width="14" height="16" viewBox="0 0 14 16"><path d="M1.2 8.3 L5 13.3 L12.6 1" fill="none" stroke="#2a2c3e" stroke-width="1.8"/></svg><div style="position:absolute;left:569px;top:625px;width:322px;height:1px;box-sizing:border-box;background:#dcdee3"></div><div class="t" style="left:587px;top:609.75px;letter-spacing:-0.42px">Scaling</div><div style="position:absolute;left:860px;top:609px;width:12px;height:12px;box-sizing:border-box;border:1px solid #9a9daa;background:#fbfbfc;box-shadow:inset 0 0 0 1px #dcdee3"></div><div style="position:absolute;left:842px;top:516px;width:48px;height:18px;box-sizing:border-box;border:1px dotted #222"></div><svg style="position:absolute;left:572px;top:519px" width="6" height="11" viewBox="0 0 6 11"><path d="M0.5 0.5h5M3 0.5v10M0.5 10.5h5" stroke="#222" stroke-width="1"/></svg><div style="position:absolute;left:869px;top:646px;width:80px;height:21px;box-sizing:border-box;border:1px solid #b3b6be;border-radius:3px;background:linear-gradient(#f1f1f4,#e3e4e8);box-shadow:inset 0 0 0 1px rgba(255,255,255,0.75);"></div><svg style="position:absolute;left:873px;top:648px" width="15" height="15" viewBox="0 0 15 15"><path d="M1.5 3.5 L3.5 1.5 L7.5 5.5 L11.5 1.5 L13.5 3.5 L9.5 7.5 L13.5 11.5 L11.5 13.5 L7.5 9.5 L3.5 13.5 L1.5 11.5 L5.5 7.5 Z" fill="#e04a4a" stroke="#b02222" stroke-width="0.8"/></svg><div class="t" style="left:902px;top:650px;letter-spacing:-0.3px">Cancel</div><div style="position:absolute;left:953px;top:646px;width:79px;height:21px;box-sizing:border-box;border:1px solid #b3b6be;border-radius:3px;background:linear-gradient(#f1f1f4,#e3e4e8);box-shadow:inset 0 0 0 1px rgba(255,255,255,0.75);background:linear-gradient(#eef3fd,#d3dff6);border-color:#b8c3d8"></div><svg style="position:absolute;left:956px;top:647px" width="16" height="17" viewBox="0 0 16 17"><path d="M1 9 L4 7 L7 11 L14 1 L15.5 2.5 L7.5 15.5 Z" fill="#8cc84a" stroke="#4c8a20" stroke-width="0.8"/></svg><div class="t" style="left:994px;top:650px;letter-spacing:-0.2px">OK</div><svg style="position:absolute;left:0px;top:0px" width="1083" height="739" viewBox="0 0 1083 739"><path d="M669 64 L698.5 122" stroke="#ff0000" stroke-width="4.2"/><path d="M691.5 124 L703 118 L702 130 Z" fill="#ff0000"/></svg><div style="position:absolute;left:611px;top:35px;width:114px;height:30px;box-sizing:border-box;border:3px solid #ff0000"></div></body></html>
